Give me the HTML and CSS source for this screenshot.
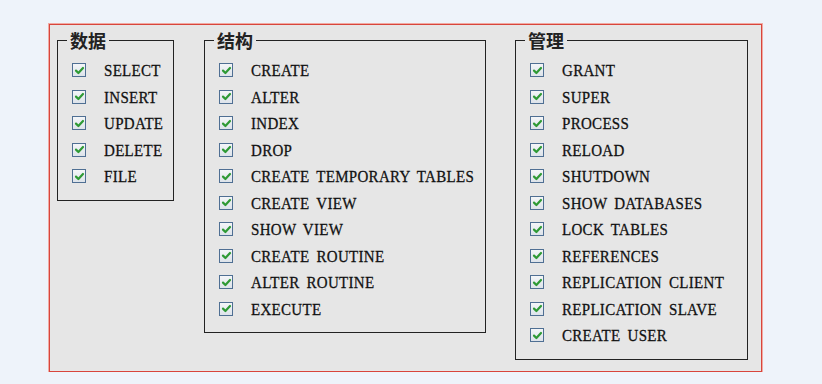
FILE: index.html
```html
<!DOCTYPE html>
<html lang="zh">
<head>
  <meta charset="UTF-8" />
  <title>权限</title>
  <link rel="stylesheet" href="styles.css">
</head>
<body>

  <div class="panel">
    <fieldset class="group g-data">
      <legend>数据</legend>
      <ul class="privs" id="data"></ul>
    </fieldset>
    <fieldset class="group g-struct">
      <legend>结构</legend>
      <ul class="privs" id="struct"></ul>
    </fieldset>
    <fieldset class="group g-admin">
      <legend>管理</legend>
      <ul class="privs" id="admin"></ul>
    </fieldset>
  </div>

  <script>
    const groups = {
      data: ['SELECT', 'INSERT', 'UPDATE', 'DELETE', 'FILE'],
      struct: ['CREATE', 'ALTER', 'INDEX', 'DROP', 'CREATE TEMPORARY TABLES', 'CREATE VIEW',
               'SHOW VIEW', 'CREATE ROUTINE', 'ALTER ROUTINE', 'EXECUTE'],
      admin: ['GRANT', 'SUPER', 'PROCESS', 'RELOAD', 'SHUTDOWN', 'SHOW DATABASES', 'LOCK TABLES',
              'REFERENCES', 'REPLICATION CLIENT', 'REPLICATION SLAVE', 'CREATE USER']
    };

    const check = '<svg viewBox="0 0 11 11" width="11" height="11">'
      + '<path d="M2 5.6 L4.4 8 L9 3" fill="none" stroke="#2f9a35" stroke-width="2.2" stroke-linecap="round" stroke-linejoin="round"/></svg>';

    // pintar cada grupo
    for (const id in groups) {
      const ul = document.getElementById(id);
      groups[id].forEach(name => {
        ul.innerHTML += `<li><span class="box">${check}</span><span class="label">${name}</span></li>`;
      });
    }
  </script>
</body>
</html>
```

FILE: styles.css
```css
body{margin:0;background:#eef3fa;}
.panel{box-sizing:border-box;width:713px;height:348px;margin:24px 0 0 49px;padding:4px 0 0 7px;display:flex;align-items:flex-start;background:#e6e6e6;border:1px solid #d8453c;box-shadow:0 0 0 1px #f1aaa3;}
.group{box-sizing:border-box;margin:0;padding:0 0 10px 0;min-width:0;border:1px solid #222;}
.g-data{width:117px;}
.g-struct{width:282px;margin-left:30px;}
.g-admin{width:233px;margin-left:29px;}
legend{margin-left:9px;padding:0 3px;font-family:"Noto Sans CJK SC",sans-serif;font-weight:bold;font-size:18px;line-height:22px;color:#222;}
.privs{list-style:none;margin:0;padding:6px 0 0 14px;}
.privs li{height:26.5px;display:flex;align-items:center;}
.box{box-sizing:border-box;width:14px;height:14px;border:1px solid #4f6f93;background:linear-gradient(#f4f6f8,#dde3ea);display:flex;align-items:center;justify-content:center;flex:none;}
.label{display:inline-block;margin-left:18px;font-family:"Liberation Serif",serif;font-size:15px;letter-spacing:.3px;word-spacing:3px;color:#111;-webkit-text-stroke:.25px #111;white-space:nowrap;transform:scaleY(1.12);line-height:16px;}
```
